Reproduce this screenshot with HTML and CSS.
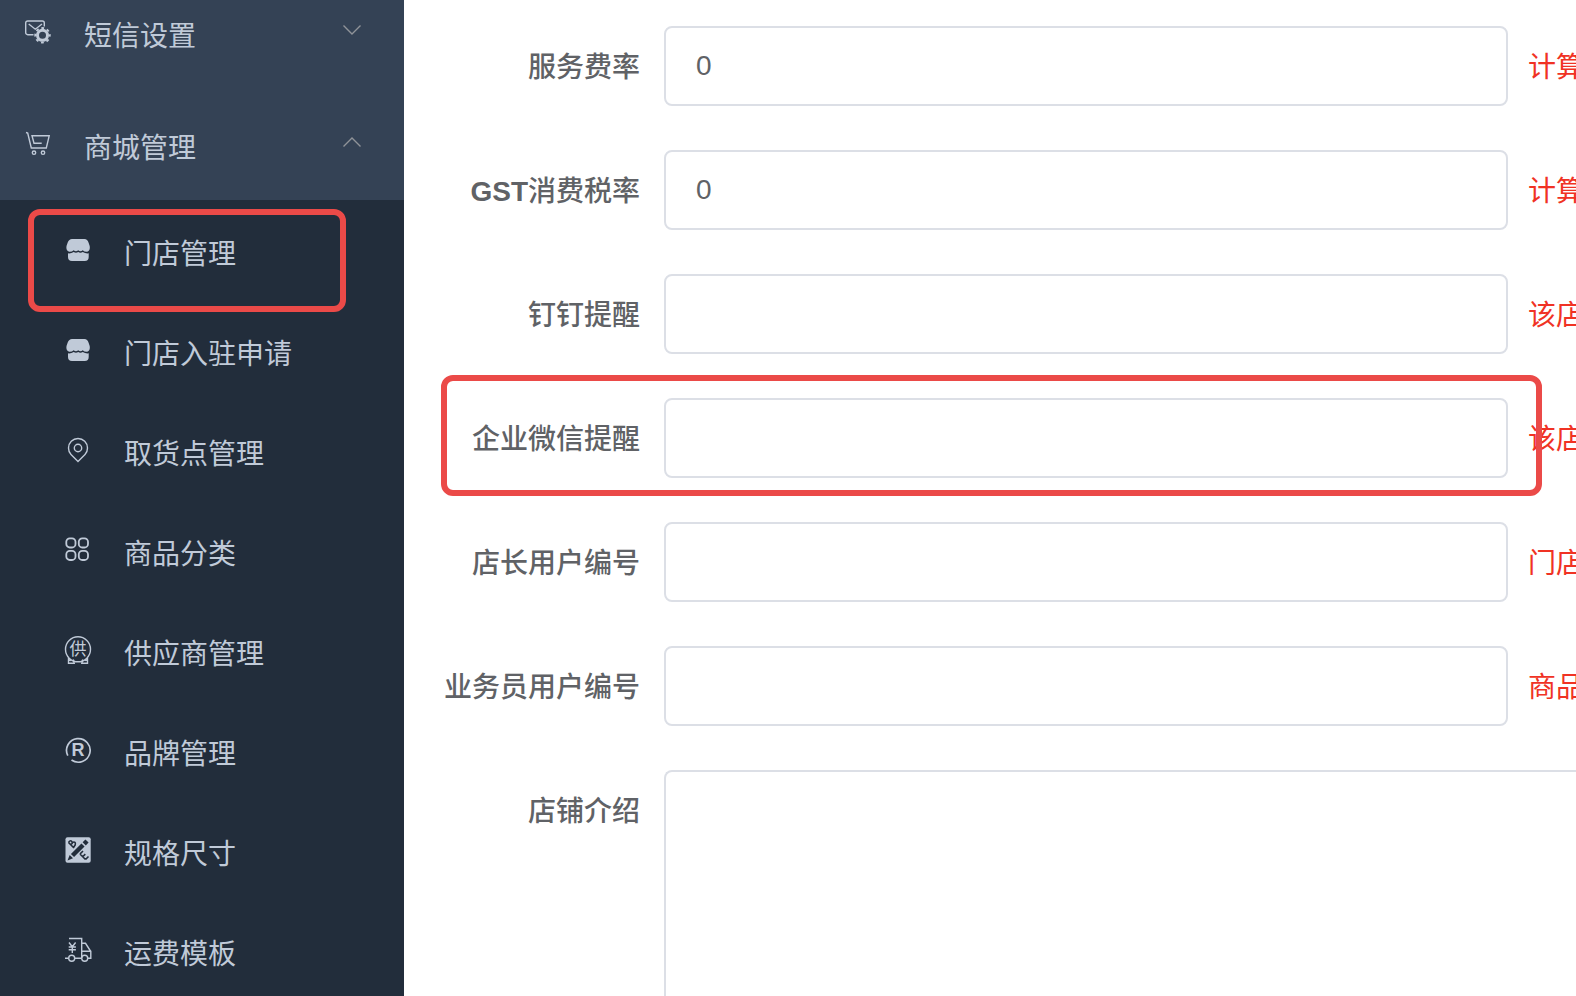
FILE: index.html
```
<!DOCTYPE html>
<html lang="zh-CN">
<head>
    <meta charset="UTF-8">
    <meta name="viewport" content="width=device-width, initial-scale=1.0">
    <title>门店管理</title>
    <link rel="stylesheet" href="styles.css">
</head>
<body>
    <div class="layout">
        <nav class="sidebar">
            <div class="menu">
                <button type="button" class="menu-title">
                    <svg class="icon" viewBox="0 0 28 28">
                        <path d="M9.5 16.7H3.7a2 2 0 0 1-2-2V5a2 2 0 0 1 2-2h14.6a2 2 0 0 1 2 2v3.5M4.7 6l6.6 5.2L18 6"/>
                        <circle cx="18.5" cy="17.3" r="5" stroke-width="3"/>
                        <circle cx="18.5" cy="17.3" r="7.2" stroke-width="2" stroke-dasharray="2.8 2.855" stroke-dashoffset="1.4"/>
                    </svg>
                    <span>短信设置</span>
                    <svg class="arrow" viewBox="0 0 18 10"><path d="M.5.5 9 9 17.5.5"/></svg>
                </button>
                <button type="button" class="menu-title" aria-expanded="true">
                    <svg class="icon" viewBox="0 0 28 28">
                        <path d="M2 2.5 3.7 3 7.3 18H22.3L25.2 5.8H8l2 7.5h7.7"/>
                        <circle cx="10" cy="22.7" r="1.7"/>
                        <circle cx="19" cy="22.7" r="1.7"/>
                    </svg>
                    <span>商城管理</span>
                    <svg class="arrow" viewBox="0 0 18 10"><path d="M.5 9.500 9 1l8.500 8.500"/></svg>
                </button>
                <ul class="submenu">
                    <li class="marked">
                        <a href="#">
                            <svg class="icon" viewBox="0 0 28 28">
                                <path class="fill" d="M8 3h12.500q3 0 4 3.500l1.200 3.500q.8 4.500-2.500 5.800-2.700.2-4.500-1.500-2.200 1.800-4.500 0-2.300 1.800-4.500 0-1.900 1.700-4.500 1.500Q1.700 14.500 2.500 10l1.200-3.500Q5 3 8 3Z"/>
                                <path class="fill" d="M4 17.300q3 .4 5.700-1.300 2.300 1.600 4.500 0 2.200 1.600 4.600 0 2.600 1.700 5.900 1.300V21q0 4-4 4H8q-4 0-4-4Z"/>
                            </svg>
                            <span>门店管理</span>
                        </a>
                    </li>
                    <li>
                        <a href="#">
                            <svg class="icon" viewBox="0 0 28 28">
                                <path class="fill" d="M8 3h12.500q3 0 4 3.500l1.200 3.500q.8 4.500-2.500 5.800-2.700.2-4.500-1.500-2.200 1.800-4.500 0-2.300 1.800-4.500 0-1.900 1.700-4.500 1.500Q1.700 14.500 2.500 10l1.200-3.500Q5 3 8 3Z"/>
                                <path class="fill" d="M4 17.300q3 .4 5.700-1.300 2.300 1.600 4.500 0 2.200 1.600 4.600 0 2.600 1.700 5.900 1.300V21q0 4-4 4H8q-4 0-4-4Z"/>
                            </svg>
                            <span>门店入驻申请</span>
                        </a>
                    </li>
                    <li>
                        <a href="#">
                            <svg class="icon" viewBox="0 0 28 28">
                                <path d="M14 25.500 7 18.500Q4.500 16 4.500 12a9.500 9.500 0 0 1 19 0q0 4-2.500 6.500Z"/>
                                <circle cx="14" cy="12" r="3.700"/>
                            </svg>
                            <span>取货点管理</span>
                        </a>
                    </li>
                    <li>
                        <a href="#">
                            <svg class="icon" viewBox="0 0 28 28">
                                <g stroke-width="1.8">
                                    <rect x="2.300" y="2.300" width="9.200" height="9.200" rx="3.500"/>
                                    <rect x="14.800" y="2.300" width="9.200" height="9.200" rx="3.500"/>
                                    <rect x="2.300" y="14.800" width="9.200" height="9.200" rx="3.500"/>
                                    <rect x="14.800" y="14.800" width="9.200" height="9.200" rx="3.500"/>
                                </g>
                            </svg>
                            <span>商品分类</span>
                        </a>
                    </li>
                    <li>
                        <a href="#">
                            <svg class="icon" viewBox="0 0 28 28">
                                <circle cx="14" cy="13.300" r="12.500"/>
                                <path d="M4.500 22v5.200h5.700l-.9-3.700M23.500 22v5.200h-5.700l.9-3.700M4.500 23.500l2.500 1.200M23.500 23.500 21 24.700"/>
                                <text x="14" y="19.300" font-size="17">供</text>
                            </svg>
                            <span>供应商管理</span>
                        </a>
                    </li>
                    <li>
                        <a href="#">
                            <svg class="icon" viewBox="0 0 28 28">
                                <path stroke-width="1.7" d="M7.500 24a11.800 11.800 0 1 0-3.700-4.300"/>
                                <text x="14" y="19.700" font-size="18" font-weight="700">R</text>
                            </svg>
                            <span>品牌管理</span>
                        </a>
                    </li>
                    <li>
                        <a href="#">
                            <svg class="icon" viewBox="0 0 28 28">
                                <rect class="fill" x="1.500" y="1.300" width="25.200" height="25.400" rx="2"/>
                                <g class="cut">
                                    <path stroke-width="4.500" d="M8.500 19.500 19 9"/>
                                    <path stroke-width="4.500" d="m20.200 7.800 2.800-2.800"/>
                                    <path class="cut-fill" d="m3.500 24.500 2.200-5.500L9 22.300Z"/>
                                    <path stroke-width="1.600" d="m4.500 6.500 5.500 5.500M4.500 6.500q2.500-3.500 3.700 0 4-1.500 3 2.500l-1.700 2.500M6.800 8.800l1.800-1.800M16 18l5.500 5.500M16 18l3-3M18.700 20.700l2.600-2.600M21.500 23.500l3-3"/>
                                </g>
                            </svg>
                            <span>规格尺寸</span>
                        </a>
                    </li>
                    <li>
                        <a href="#">
                            <svg class="icon" viewBox="0 0 28 28">
                                <path d="M5 2.500h12.700V22M17.700 7.300h3.800l4 6.200 1.300 1.800V22.300H24M17.700 15.300h9M1 22.300h3.400M11 22.300h6.400"/>
                                <circle cx="7.700" cy="22.300" r="3"/>
                                <circle cx="20.700" cy="22.300" r="3"/>
                                <path d="m5 6.500 3.300 4.300 3.300-4.300M8.300 10.800V17M4.700 11h7.200M4.700 13.800h7.200"/>
                            </svg>
                            <span>运费模板</span>
                        </a>
                    </li>
                </ul>
            </div>
        </nav>

        <main class="content">
            <form class="form">
                <div class="form-item">
                    <label for="service-rate">服务费率</label>
                    <input type="text" id="service-rate" value="0">
                    <span class="tip">计算</span>
                </div>
                <div class="form-item">
                    <label for="gst-rate"><b>GST</b>消费税率</label>
                    <input type="text" id="gst-rate" value="0">
                    <span class="tip">计算</span>
                </div>
                <div class="form-item">
                    <label for="dingtalk">钉钉提醒</label>
                    <input type="text" id="dingtalk">
                    <span class="tip">该店</span>
                </div>
                <div class="form-item marked">
                    <label for="wecom">企业微信提醒</label>
                    <input type="text" id="wecom">
                    <span class="tip">该店</span>
                </div>
                <div class="form-item">
                    <label for="manager-id">店长用户编号</label>
                    <input type="text" id="manager-id">
                    <span class="tip">门店</span>
                </div>
                <div class="form-item">
                    <label for="salesman-id">业务员用户编号</label>
                    <input type="text" id="salesman-id">
                    <span class="tip">商品</span>
                </div>
                <div class="form-item intro">
                    <label for="intro">店铺介绍</label>
                    <textarea id="intro"></textarea>
                </div>
            </form>
        </main>
    </div>
</body>
</html>
```
FILE: styles.css
```
* {
    margin: 0;
    padding: 0;
    box-sizing: border-box;
}

body {
    font-family: "Liberation Sans", "Noto Sans CJK SC", sans-serif;
    font-size: 28px;
    color: #606266;
    background: #fff;
    overflow: hidden;
}

.layout {
    display: flex;
    height: 100vh;
}

/* 左侧菜单 */
.sidebar {
    flex: 0 0 404px;
    background: #344255;
    overflow: hidden;
}

/* 菜单已向上滚动一小段 */
.menu {
    margin-top: -24px;
}

.menu-title,
.submenu a {
    display: flex;
    align-items: center;
    gap: 32px;
    width: 100%;
    color: #c0cad8;
    font: inherit;
    text-align: left;
    text-decoration: none;
}

.menu-title {
    height: 112px;
    padding: 0 43px 0 24px;
    background: none;
    border: 0;
    cursor: pointer;
}

.menu-title span,
.submenu span {
    padding-top: 3px;
}

.submenu {
    list-style: none;
    background: #222d3b;
}

.submenu li {
    position: relative;
}

.submenu a {
    height: 100px;
    padding-left: 64px;
}

.icon {
    flex: none;
    width: 28px;
    height: 28px;
    fill: none;
    stroke: #c0cad8;
    stroke-width: 1.4;
}

.icon .fill,
.icon text {
    fill: #c0cad8;
    stroke: none;
}

.icon text {
    text-anchor: middle;
}

.icon .cut {
    stroke: #222d3b;
}

.icon .cut-fill {
    fill: #222d3b;
    stroke: none;
}

.arrow {
    width: 18px;
    height: 10px;
    margin: 0 0 4px auto;
    fill: none;
    stroke: #909399;
    stroke-width: 1.4;
}

/* 右侧表单 */
.content {
    flex: 1;
    min-width: 0;
    overflow: hidden;
}

.form {
    display: flex;
    flex-direction: column;
    gap: 44px;
    height: 100%;
    padding-top: 26px;
}

.form-item {
    position: relative;
    display: grid;
    grid-template-columns: 260px 1fr 68px;
}

.form-item label,
.tip {
    padding-top: 4px;
    line-height: 76px;
    white-space: nowrap;
}

.form-item label {
    padding-right: 24px;
    font-weight: 500;
    text-align: right;
}

.form-item input,
.form-item textarea {
    width: 100%;
    border: 2px solid #dcdfe6;
    border-radius: 8px;
    background: #fff;
    color: #606266;
    font: inherit;
    outline: none;
}

.form-item input {
    height: 80px;
    padding: 0 30px;
}

.tip {
    padding-left: 20px;
    color: #f03224;
}

.intro {
    flex: 1;
}

.intro textarea {
    grid-column: 2 / -1;
    height: 100%;
    padding: 10px 30px;
    border-width: 2px 0 0 2px;
    border-radius: 8px 0 0;
    resize: none;
}

/* 红色标注框 */
.marked::after {
    content: '';
    position: absolute;
    z-index: 1;
    border: 6px solid #eb4a48;
    border-radius: 12px;
    pointer-events: none;
}

.submenu .marked::after {
    inset: 9px 58px -12px 28px;
}

.form-item.marked::after {
    inset: -23px 34px -18px 37px;
}
```
